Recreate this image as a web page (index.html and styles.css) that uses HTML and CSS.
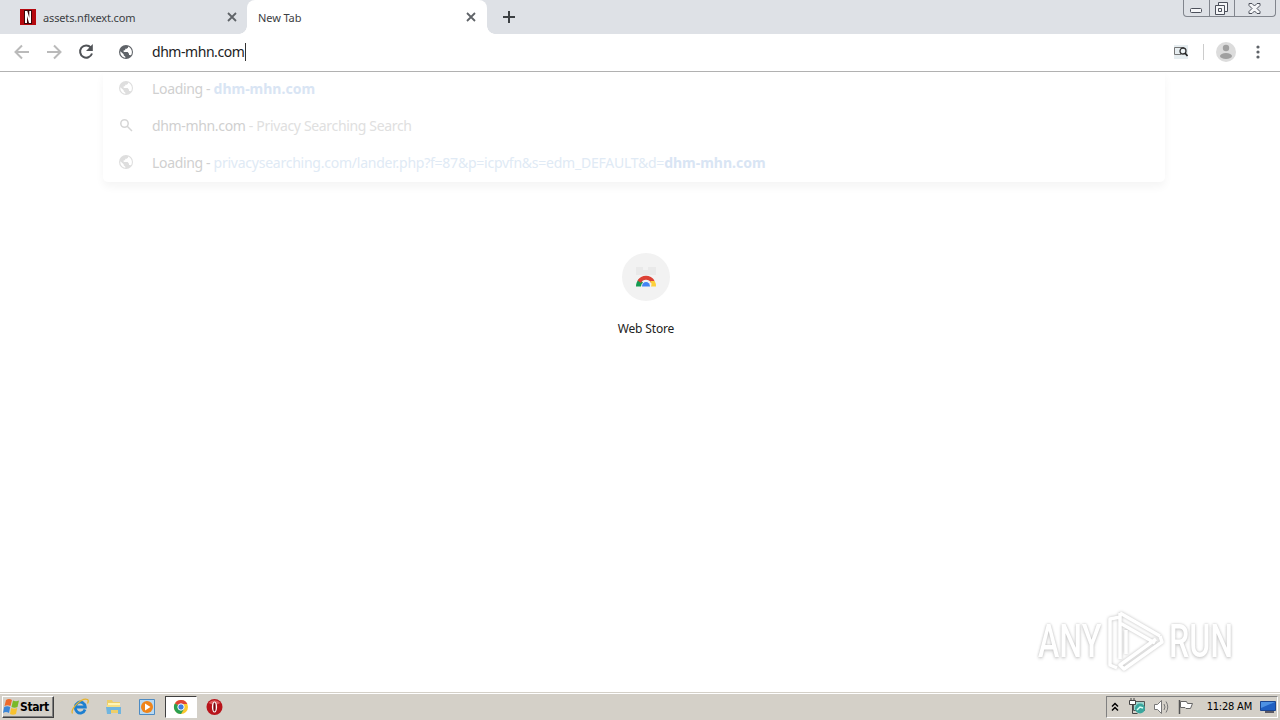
FILE: index.html
```html
<!DOCTYPE html>
<html lang="en">
<head>
  <meta charset="UTF-8" />
  <title>New Tab</title>
  <link rel="stylesheet" href="styles.css">
</head>
<body>
  <svg class="defs" width="0" height="0">
    <symbol id="globe" viewBox="0 0 24 24">
      <circle cx="12" cy="12" r="10.5" fill="currentColor"/>
      <path d="M3.500 11l5 4.500v1.500l2.500 2v2C6 20 3 16 3.500 11zM15 3.800v1.700l-2 1.800h-2.200v2.200H8.500V12h6l2 2.500v2h2l.8.8c3-4 2-10.500-4.300-13.500z" fill="#fff"/>
    </symbol>
    <symbol id="close" viewBox="0 0 10 10">
      <path d="M1 1l8 8M9 1L1 9" fill="none" stroke="#5f6368" stroke-width="1.800"/>
    </symbol>
  </svg>

  <div class="tabstrip">
    <div class="tab">
      <svg class="favicon" viewBox="0 0 16 16"><path d="M0 0h16v16H0z" fill="#b5090f"/><path d="M4 1h8v14H4z" fill="#3c0507"/><path d="M5 2h2.300l2 7V2H11v12H9L7 7v7H5z" fill="#fff"/></svg>
      <span class="tab-title assets">assets.nflxext.com</span>
      <svg class="close"><use href="#close"/></svg>
    </div>
    <div class="tab active">
      <span class="tab-title">New Tab</span>
      <svg class="close"><use href="#close"/></svg>
    </div>
    <svg class="plus" viewBox="0 0 12 12"><path d="M6 0v12M0 6h12" stroke="#3c4043" stroke-width="2"/></svg>
    <div class="window-buttons">
      <div><svg width="12" height="5"><rect x=".5" y=".5" width="11" height="4" rx="1"/></svg></div>
      <div><svg width="13" height="13"><path d="M3.500 3.500v-3h9v9h-3M.5 3.500h9v9h-9zM3.500 6.500h3v3h-3z"/></svg></div>
      <div><svg width="13" height="11"><path d="M1 .5h3L6.500 3 9 .5h3v2L9 5.500l3 3v2H9L6.500 8 4 10.500H1v-2l3-3-3-3z"/></svg></div>
    </div>
  </div>

  <div class="toolbar">
    <svg class="nav off" viewBox="0 0 16 16"><path d="M15 8H2M8 1.500L1.500 8 8 14.500"/></svg>
    <svg class="nav off" viewBox="0 0 16 16"><path d="M1 8h13M8 1.500L14.500 8 8 14.500"/></svg>
    <svg class="nav" viewBox="0 0 16 16"><path d="M12.800 3.500A6.100 6.100 0 1 0 14 9.500"/><path d="M14.800 0v7H8z" fill="#505357" stroke="none"/></svg>
    <svg class="globe"><use href="#globe"/></svg>
    <span class="url">dhm-mhn.com</span><span class="caret"></span>
    <div class="actions">
      <svg class="ext" viewBox="0 0 16 16"><path d="M1 1h14v14H1z" fill="#e6edf0"/><path d="M11 3.500H1.500v7H8" fill="none" stroke="#777"/><circle cx="10" cy="7" r="3" fill="#eef4f7" stroke="#333" stroke-width="1.300"/><path d="M12 9l2.500 3" stroke="#222" stroke-width="1.700"/></svg>
      <span class="divider"></span>
      <svg class="avatar" viewBox="0 0 20 20"><circle cx="10" cy="10" r="10" fill="#dcdcdc"/><circle cx="10" cy="6" r="3.200" fill="#a0a0a0"/><ellipse cx="10" cy="14" rx="6" ry="3" fill="#a0a0a0"/></svg>
      <svg class="dots" viewBox="0 0 4 14"><circle cx="2" cy="2" r="1.600"/><circle cx="2" cy="7" r="1.600"/><circle cx="2" cy="12" r="1.600"/></svg>
    </div>
  </div>

  <div class="page">
    <div class="suggestions">
      <div class="row"><svg class="globe"><use href="#globe"/></svg><span>Loading - <b>dhm-mhn.com</b></span></div>
      <div class="row"><svg class="glass" viewBox="0 0 14 14"><circle cx="5.500" cy="5.500" r="3.700"/><path d="M8 8l5 5"/></svg><span>dhm-mhn.com<i> - Privacy Searching Search</i></span></div>
      <div class="row"><svg class="globe"><use href="#globe"/></svg><span>Loading - <em>privacysearching.com/lander.php?f=87&amp;p=icpvfn&amp;s=edm_DEFAULT&amp;d=</em><b>dhm-mhn.com</b></span></div>
    </div>

    <div class="shortcut">
      <div class="circle">
        <svg width="22" height="22" viewBox="0 0 22 22">
          <path d="M1 1h7v3h5V1h8v8H1z" fill="#e9e9e9"/>
          <path d="M1 20.500a10 10 0 0 1 3-7.500l4 3.500a5 5 0 0 0-2 4z" fill="#159b52"/>
          <path d="M2.500 14.500a10 10 0 0 1 17 0L16 17a5.500 5.500 0 0 0-10 0z" fill="#dc4034"/>
          <path d="M15 15h4.700a10 10 0 0 1 1.300 5.500h-5a5 5 0 0 0-1-5.500z" fill="#fdd03b"/>
          <path d="M7 20.500a4 4.500 0 0 1 8 0z" fill="#4385f4"/>
        </svg>
      </div>
      <span>Web Store</span>
    </div>

    <div class="watermark">
      <span class="word any">ANY</span>
      <svg width="56" height="64" viewBox="0 0 56 64">
        <path d="M12 8L2 10v46l7 3M12 4v46M12 4l40 23M12 14l35 20M12 4v10M52 27l2 6-38 27-4-4 36-26M18 21v24"/>
      </svg>
      <span class="word run">RUN</span>
    </div>
  </div>

  <div class="taskbar">
    <div class="start">
      <svg width="17" height="16" viewBox="0 0 17 16"><path d="M3 1q3-2 6 0L7.500 7q-3-1.500-6 0z" fill="#ed6a2c"/><path d="M10 1.500q3 1.500 6 0L14.500 8q-3 1.500-6 0z" fill="#79b928"/><path d="M1.200 8q3-1.500 6 0L6 14q-3-2-6 0z" fill="#3b86d8"/><path d="M8.200 9q3 1.500 6 0L13 15q-3 1.500-6 0z" fill="#f8c22e"/></svg>
      <span>Start</span>
    </div>
    <div class="task"><svg width="18" height="18" viewBox="0 0 18 18"><path d="M14 11.500A5 5.500 0 1 1 14.300 9H5" fill="none" stroke="#1d7fd0" stroke-width="2.800"/><path d="M1.500 15.500C-1 11 11-1 16.500 1.500q1.500 1 0 4" fill="none" stroke="#e6b32d" stroke-width="1.300"/></svg></div>
    <div class="task"><svg width="18" height="18" viewBox="0 0 18 18"><path d="M2 2h5l1 2h7v11H2z" fill="#edce6a"/><path d="M3 5h12v3H3z" fill="#fff5b5"/><path d="M1 9h15v7h-3v-4H6v4H2z" fill="#70b5df"/><path d="M2 7h13v2H2z" fill="#f7df83"/></svg></div>
    <div class="task"><svg width="18" height="18" viewBox="0 0 18 18"><path d="M1.500 1.500h15v15h-15z" fill="#b8d9f2" stroke="#4d8bc3"/><circle cx="9" cy="9" r="6" fill="#ef8419"/><path d="M7 5.500v7L12.500 9z" fill="#fff"/></svg></div>
    <div class="task current"><svg width="16" height="16" viewBox="0 0 16 16"><circle cx="8" cy="8" r="7" fill="#fbc82e"/><path d="M8 8L2 4.300A7 7 0 0 0 8 15l3-5z" fill="#2b9f50"/><path d="M8 8L2 4.300A7 7 0 0 1 14.300 5H8z" fill="#df4435"/><circle cx="8" cy="8" r="3.200" fill="#3e7de0" stroke="#fff"/></svg></div>
    <div class="task"><svg width="18" height="18" viewBox="0 0 18 18"><circle cx="9.500" cy="9" r="8" fill="#b8141b"/><path d="M3.500 5a8 8 0 0 1 12 0q-6 3-12 0z" fill="#dc5a5c"/><ellipse cx="9.500" cy="9" rx="2.600" ry="5.500" fill="#fff"/><ellipse cx="9.500" cy="9" rx="1.200" ry="4.500" fill="#7d0910"/></svg></div>

    <div class="tray">
      <svg class="chev" width="8" height="10" viewBox="0 0 8 10"><path d="M1 4.500l3-3 3 3M1 8.500l3-3 3 3" fill="none" stroke="#000" stroke-width="1.500"/></svg>
      <svg class="net" width="17" height="17" viewBox="0 0 17 17"><path d="M4.500 3.500h11v9h-11z" fill="#9ed6ce" stroke="#555"/><circle cx="11" cy="10.500" r="5" fill="#3aa79e"/><path d="M8 12l3-3 3 1" stroke="#d8fff5" stroke-width="1.500" fill="none"/><path d="M1 3h5v3H1z" fill="#fff"/><path d="M.5 2.500h6v4h-6zM2 0v2M5 0v2M3.500 6v9.500h5" stroke="#444" fill="none"/></svg>
      <svg class="vol" width="17" height="16" viewBox="0 0 17 16"><path d="M1.500 5.500h3l4-4v13l-4-4h-3z" fill="#fff" stroke="#777"/><path d="M11 5q2 3 0 6M13 2.500q3.500 5.500 0 11" fill="none" stroke="#777"/></svg>
      <svg class="flag" width="17" height="16" viewBox="0 0 17 16"><path d="M2.500 1v14" stroke="#555" stroke-width="1.500"/><path d="M3.500 2.500h6l1 2h5l-2 5H9l-1-1H3.500z" fill="#fff" stroke="#666"/></svg>
      <span class="clock">11:28 AM</span>
      <svg class="desk" width="16" height="14" viewBox="0 0 16 14"><path d="M.5 1.500h15v9H.5z" fill="#1f5fc2" stroke="#1b4590"/><path d="M1 2h14L1 8z" fill="#4d91e3"/><path d="M5 12h9" stroke="#334" stroke-width="1.500"/></svg>
    </div>
  </div>
</body>
</html>
```

FILE: styles.css
```css
* { box-sizing: border-box; }
body {
  margin: 0;
  width: 1280px;
  height: 720px;
  overflow: hidden;
  display: flex;
  flex-direction: column;
  background: #fff;
  font-family: "Noto Sans", sans-serif;
  font-size: 14px;
  color: #222;
}
svg { display: block; flex: none; }
.defs { position: absolute; }
span, b { white-space: nowrap; }

.tabstrip {
  height: 34px;
  background: #dee1e6;
  display: flex;
  align-items: flex-start;
}
.tab {
  width: 247px;
  height: 34px;
  padding: 0 10px 0 20px;
  display: flex;
  align-items: center;
  font-size: 11px;
  color: #3c4043;
}
.tab.active {
  position: relative;
  width: 240px;
  padding: 0 11px;
  background: #fff;
  border-radius: 8px 8px 0 0;
}
.tab.active::before, .tab.active::after {
  content: "";
  position: absolute;
  bottom: 0;
  width: 8px;
  height: 8px;
}
.tab.active::before { left: -8px; background: radial-gradient(circle at 0 0, transparent 7.5px, #fff 8px); }
.tab.active::after { right: -8px; background: radial-gradient(circle at 100% 0, transparent 7.5px, #fff 8px); }
.favicon { width: 16px; height: 16px; margin-right: 7px; }
.tab-title { letter-spacing: -0.1px; }
.tab-title.assets { letter-spacing: -0.15px; }
.close { width: 10px; height: 10px; margin-left: auto; }
.plus { width: 12px; height: 12px; margin: 11px 0 0 16px; }
.window-buttons {
  display: flex;
  width: 93px;
  height: 17px;
  margin: 0 4px 0 auto;
  border: 1px solid #81858d;
  border-top: 0;
  border-radius: 0 0 4px 4px;
}
.window-buttons div {
  width: 25px;
  padding-right: 2px;
  display: flex;
  justify-content: center;
  align-items: center;
}
.window-buttons div:first-child { padding-top: 5px; }
.window-buttons div + div { border-left: 1px solid #81858d; }
.window-buttons div:last-child { flex: 1; }
.window-buttons svg { fill: #f5f6f8; stroke: #4c505b; }

.toolbar {
  height: 38px;
  border-bottom: 1px solid #b2b2b2;
  padding: 0 20px 1px 14px;
  display: flex;
  align-items: center;
}
.nav { width: 16px; height: 16px; margin-right: 16px; fill: none; stroke: #505357; stroke-width: 2; }
.nav.off { stroke: #bababa; }
.globe { width: 16px; height: 16px; color: #5f6368; }
.toolbar .globe { margin: 0 18px 0 8px; }
.url { width: 93px; padding-bottom: 2px; letter-spacing: -0.45px; }
.caret { width: 1px; height: 18px; background: #333; }
.actions { margin-left: auto; display: flex; align-items: center; }
.ext { width: 16px; height: 16px; }
.divider { width: 1px; height: 16px; margin: 0 12px 0 14px; background: #ccc; }
.avatar { width: 20px; height: 20px; }
.dots { width: 4px; height: 14px; margin-left: 20px; fill: #5f6368; }

.page {
  position: relative;
  height: 620px;
  display: flex;
  flex-direction: column;
  align-items: center;
}
.suggestions {
  align-self: flex-start;
  width: 1062px;
  height: 110px;
  margin-left: 103px;
  border-radius: 0 0 5px 5px;
  box-shadow: 0 5px 9px rgba(0, 0, 0, 0.045);
}
.row {
  display: flex;
  align-items: center;
  height: 37px;
  padding: 0 0 5px 15px;
  color: #d0d0d0;
  letter-spacing: -0.34px;
}
.row .globe, .glass { width: 16px; height: 16px; margin-right: 18px; color: #dedede; }
.glass { padding: 1px; fill: none; stroke: #d5d5d5; stroke-width: 1.5; }
.row b { color: #d9e5f4; letter-spacing: 0; }
.row em { font-style: normal; color: #e0eaf5; letter-spacing: -0.24px; }
.row i { font-style: normal; color: #e0e0e0; }

.shortcut {
  margin: 71px 0 0 12px;
  display: flex;
  flex-direction: column;
  align-items: center;
  font-size: 12px;
  letter-spacing: -0.15px;
}
.circle {
  width: 48px;
  height: 48px;
  margin-bottom: 19px;
  border-radius: 50%;
  background: #f2f2f2;
  display: flex;
  align-items: center;
  justify-content: center;
}

.watermark {
  position: absolute;
  left: 1038px;
  top: 536px;
  width: 196px;
  height: 66px;
  display: flex;
  align-items: center;
  color: #fff;
}
.watermark svg {
  margin: 0 5px;
  fill: none;
  stroke: #fff;
  stroke-width: 3.5;
  stroke-linejoin: round;
  filter: drop-shadow(0 0 1.5px #bbb);
}
.word {
  width: 65px;
  font: 500 46px Roboto, sans-serif;
  transform: scaleX(0.7);
  transform-origin: 0 50%;
  text-shadow: 0 0 3px #bbb, 0 2px 4px #ddd;
}

.taskbar {
  height: 28px;
  background: #d4d0c8;
  border-top: 1px solid #d4d0c8;
  box-shadow: inset 0 1px #fff;
  padding: 2px 2px 2px;
  display: flex;
  align-items: center;
}
.start {
  width: 52px;
  height: 22px;
  margin-right: 10px;
  border: 1px solid;
  border-color: #fff #404040 #404040 #fff;
  box-shadow: inset -1px -1px #808080;
  display: flex;
  align-items: center;
  font: bold 12px "DejaVu Sans Condensed", sans-serif;
  color: #000;
}
.start span { letter-spacing: -0.4px; }
.task { width: 32px; height: 22px; margin-right: 1.6px; display: flex; align-items: center; justify-content: center; }
.task.current { background: #fff; border: 1px solid; border-color: #404040 #fff #fff #404040; }
.tray {
  width: 172px;
  height: 22px;
  margin-left: auto;
  border: 1px solid;
  border-color: #808080 #fff #fff #808080;
  display: flex;
  align-items: center;
  padding: 0 1px 0 4px;
}
.net { margin-left: 10px; }
.vol { margin-left: 7px; }
.flag { margin-left: 7px; }
.clock {
  margin-left: auto;
  margin-right: 8px;
  font: 11px "DejaVu Sans Condensed", sans-serif;
  color: #000;
  letter-spacing: -0.2px;
}
```
